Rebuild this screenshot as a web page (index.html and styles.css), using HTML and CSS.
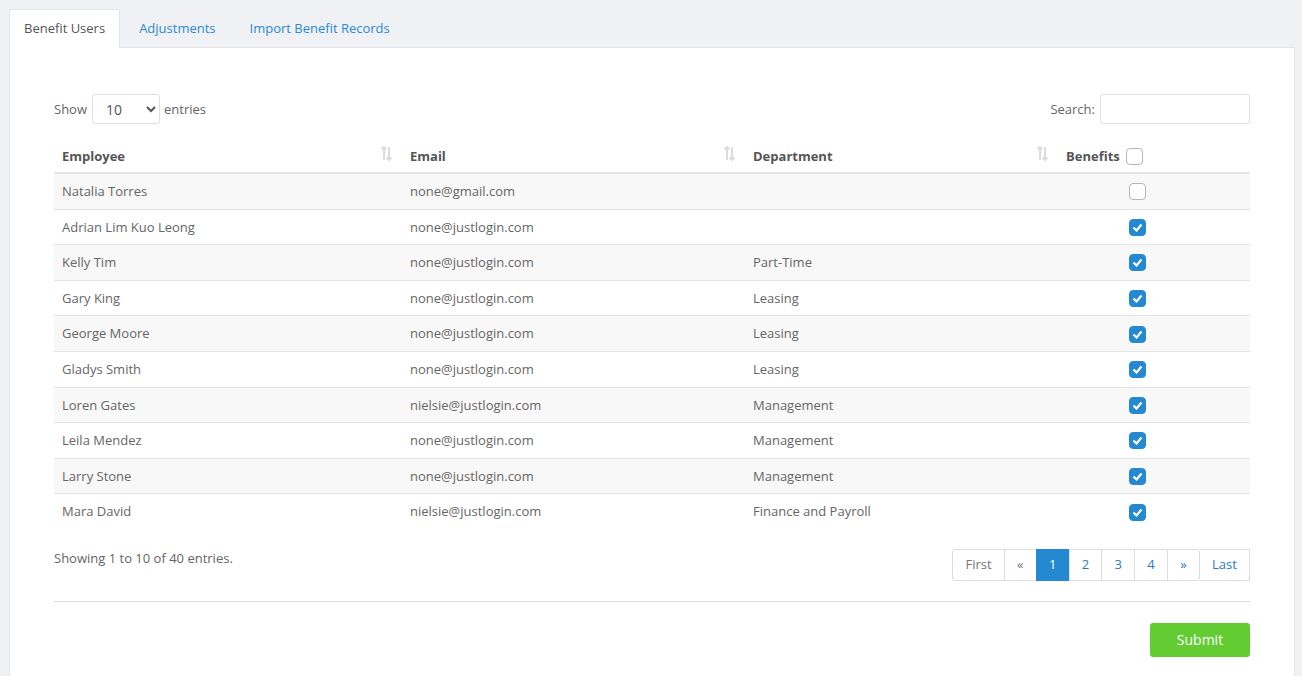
FILE: index.html
```html
<!DOCTYPE html>
<html>
  <head>
  <meta name="viewport" content="width=device-width, initial-scale=1">
  <link rel="stylesheet" href="styles.css">
  </head>
  <body>
    <ul class="nav-tabs">
      <li class="active"><a>Benefit Users</a></li>
      <li><a>Adjustments</a></li>
      <li><a>Import Benefit Records</a></li>
    </ul>

    <div class="panel">
      <div class="top-row">
        <label class="length">Show
          <select class="length-select">
            <option>10</option>
            <option>25</option>
            <option>50</option>
          </select>
          entries</label>
        <label class="search">Search: <input type="text" class="search-input"></label>
      </div>

      <table class="grid">
        <colgroup>
          <col class="c-emp"><col class="c-mail"><col class="c-dept"><col class="c-ben">
        </colgroup>
        <thead>
          <tr>
            <th class="sortable">Employee<span class="sort"><svg width="11" height="15" viewBox="0 0 11 15"><path d="M3 1v13M0.5 3.5L3 1l2.5 2.5M8 14V1M5.5 11.5L8 14l2.5-2.5" fill="none" stroke="#dcdcdc" stroke-width="2"/></svg></span></th>
            <th class="sortable">Email<span class="sort"><svg width="11" height="15" viewBox="0 0 11 15"><path d="M3 1v13M0.5 3.5L3 1l2.5 2.5M8 14V1M5.5 11.5L8 14l2.5-2.5" fill="none" stroke="#dcdcdc" stroke-width="2"/></svg></span></th>
            <th class="sortable">Department<span class="sort"><svg width="11" height="15" viewBox="0 0 11 15"><path d="M3 1v13M0.5 3.5L3 1l2.5 2.5M8 14V1M5.5 11.5L8 14l2.5-2.5" fill="none" stroke="#dcdcdc" stroke-width="2"/></svg></span></th>
            <th class="ben-head">Benefits <span class="box"></span></th>
          </tr>
        </thead>
        <tbody id="rows"></tbody>
      </table>

      <div class="bottom-row">
        <div class="info">Showing 1 to 10 of 40 entries.</div>
        <div class="pager">
          <a class="pg first disabled">First</a><a class="pg disabled">&laquo;</a><a class="pg active">1</a><a class="pg">2</a><a class="pg">3</a><a class="pg">4</a><a class="pg next">&raquo;</a><a class="pg last">Last</a>
        </div>
      </div>

      <hr class="divider">

      <div class="actions">
        <button class="btn-submit">Submit</button>
      </div>
    </div>

    <script>
      var users = [
        ["Natalia Torres", "none@gmail.com", "", false],
        ["Adrian Lim Kuo Leong", "none@justlogin.com", "", true],
        ["Kelly Tim", "none@justlogin.com", "Part-Time", true],
        ["Gary King", "none@justlogin.com", "Leasing", true],
        ["George Moore", "none@justlogin.com", "Leasing", true],
        ["Gladys Smith", "none@justlogin.com", "Leasing", true],
        ["Loren Gates", "nielsie@justlogin.com", "Management", true],
        ["Leila Mendez", "none@justlogin.com", "Management", true],
        ["Larry Stone", "none@justlogin.com", "Management", true],
        ["Mara David", "nielsie@justlogin.com", "Finance and Payroll", true]
      ];
      var check = '<svg width="11" height="9" viewBox="0 0 11 9"><path d="M1.5 4.5l3 3 5-6" fill="none" stroke="#fff" stroke-width="2.2"/></svg>';
      var html = "";
      for (var i = 0; i < users.length; i++)
      {
        var u = users[i];
        html += "<tr><td>" + u[0] + "</td><td>" + u[1] + "</td><td>" + u[2] + "</td>" +
          '<td class="ben-cell"><span class="box' + (u[3] ? ' checked">' + check : '">') + "</span></td></tr>";
      }
      document.getElementById("rows").innerHTML = html;
    </script>
  </body>
</html>
```

FILE: styles.css
```css
body {
  margin: 0;
  padding: 9px 7px 0 9px;
  background-color: #f0f1f5;
  font-family: "Open Sans", "Liberation Sans", sans-serif;
  font-size: 13px;
  color: #666;
}
.nav-tabs {
  list-style: none;
  margin: 0;
  padding: 0;
  display: flex;
  position: relative;
  z-index: 1;
}
.nav-tabs li {
  margin-right: 4px;
}
.nav-tabs a {
  display: block;
  padding: 10px 14px;
  line-height: 17px;
  border: 1px solid transparent;
  border-bottom: none;
  border-radius: 3px 3px 0 0;
  color: #2a8ad3;
  cursor: pointer;
}
.nav-tabs li.active a {
  background: #fff;
  color: #555;
  border-color: #e3e4e8;
  padding-bottom: 11px;
}
.panel {
  background: #fff;
  border: 1px solid #e3e4e8;
  margin-top: -1px;
  padding: 46px 44px 30px 44px;
}
.top-row {
  display: flex;
  justify-content: space-between;
  align-items: center;
  height: 30px;
}
.length, .search {
  display: flex;
  align-items: center;
  color: #666;
}
.length-select {
  width: 68px;
  height: 30px;
  margin: 0 4px 0 5px;
  padding: 0 8px 0 9px;
  border: 1px solid #e0e0e0;
  border-radius: 3px;
  background: #fff;
  font-family: inherit;
  font-size: 14px;
  color: #555;
}
.search-input {
  width: 150px;
  height: 30px;
  margin-left: 5px;
  box-sizing: border-box;
  border: 1px solid #e0e0e0;
  border-radius: 3px;
}
.grid {
  width: 100%;
  margin-top: 14px;
  border-collapse: collapse;
  table-layout: fixed;
}
.c-emp { width: 348px; }
.c-mail { width: 343px; }
.c-dept { width: 313px; }
.grid th {
  text-align: left;
  font-weight: 700;
  color: #555;
  padding: 9px 8px 7px 8px;
  line-height: 18px;
  border-bottom: 2px solid #e4e4e4;
}
.grid th.sortable {
  position: relative;
}
.sort {
  position: absolute;
  right: 10px;
  top: 8px;
}
.grid td {
  padding: 8px;
  line-height: 18.6px;
  height: 18.6px;
  border-top: 1px solid #e4e4e4;
  white-space: nowrap;
}
.grid tbody tr:first-child td {
  border-top: none;
}
.grid tbody tr:nth-child(odd) {
  background: #f8f8f8;
}
.ben-head {
  padding-right: 0;
}
.ben-head .box {
  margin-left: 3px;
  vertical-align: -4px;
}
.ben-cell {
  padding-left: 71px !important;
}
.ben-cell .box {
  display: flex;
  margin-top: 1px;
}
.box {
  display: inline-flex;
  align-items: center;
  justify-content: center;
  width: 17px;
  height: 17px;
  box-sizing: border-box;
  border: 1px solid #b5b5b5;
  border-radius: 4px;
  background: #fff;
}
.box.checked {
  background: #2489d0;
  border-color: #2489d0;
}
.bottom-row {
  display: flex;
  justify-content: space-between;
  align-items: flex-start;
  margin-top: 20px;
}
.info {
  line-height: 18px;
}
.pager {
  display: flex;
}
.pg {
  display: block;
  padding: 6px 12.2px 7px 12.2px;
  line-height: 17px;
  border: 1px solid #ddd;
  margin-left: -1px;
  color: #2a7ac4;
  background: #fff;
  cursor: pointer;
}
.pg.disabled {
  color: #777;
}
.pg.first {
  margin-left: 0;
  border-radius: 3px 0 0 3px;
}
.pg.next {
  border-radius: 0 3px 3px 0;
}
.pg.last {
  margin-left: 0;
  border-left: none;
}
.pg.active {
  background: #2489d0;
  border-color: #2489d0;
  color: #fff;
}
.divider {
  border: none;
  border-top: 1px solid #dcdcdc;
  margin: 20px 0 21px 0;
}
.actions {
  display: flex;
  justify-content: flex-end;
}
.btn-submit {
  width: 100px;
  height: 34px;
  border: none;
  border-radius: 3px;
  background: #63cc33;
  color: #fff;
  font-family: inherit;
  font-size: 14px;
  cursor: pointer;
}
```
